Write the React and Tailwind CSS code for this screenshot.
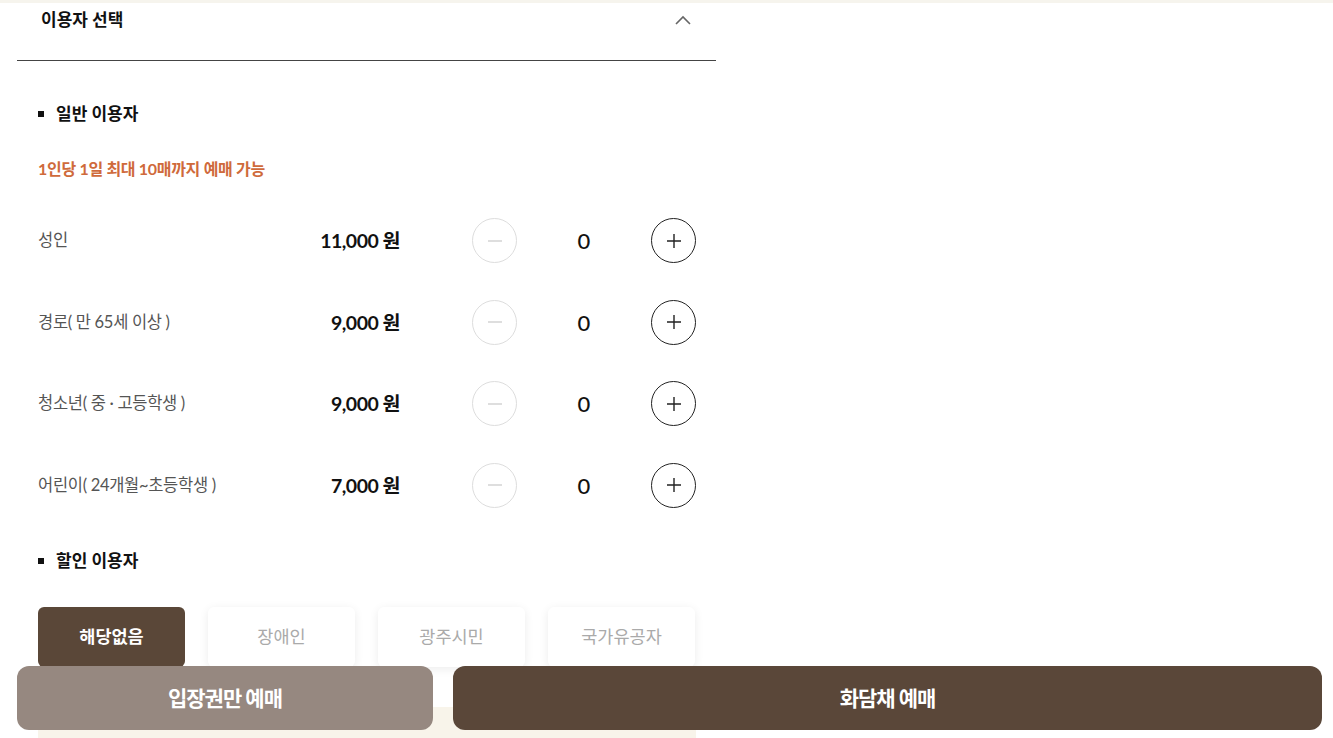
import React, { useState } from 'react';

const font = { fontFamily: "Lato, 'Noto Sans CJK KR', sans-serif" };

const rows = [
  { label: '성인', price: '11,000' },
  { label: '경로( 만 65세 이상 )', price: '9,000' },
  { label: '청소년( 중 · 고등학생 )', price: '9,000' },
  { label: '어린이( 24개월~초등학생 )', price: '7,000' },
];

const discounts = ['해당없음', '장애인', '광주시민', '국가유공자'];

function Counter({ label, price }) {
  const [count, setCount] = useState(0);
  return (
    <div className="flex h-[81.5px] items-center">
      <div className="flex w-[362px] items-center justify-between">
        <span className="text-[16.5px] tracking-[-0.3px] text-[#555]">{label}</span>
        <span className="text-[19.5px] font-bold tracking-[-0.5px] text-[#111]">{price} 원</span>
      </div>
      <button
        onClick={() => setCount(Math.max(0, count - 1))}
        className="ml-[72px] flex h-[45px] w-[45px] items-center justify-center rounded-full border border-[#ddd]"
      >
        <svg width="16" height="16" viewBox="0 0 16 16">
          <path d="M1 8h14" stroke="#ccc" strokeWidth="1.3" />
        </svg>
      </button>
      <span className="w-[134px] text-center text-[22px] font-medium text-[#111]">{count}</span>
      <button
        onClick={() => setCount(count + 1)}
        className="flex h-[45px] w-[45px] items-center justify-center rounded-full border border-[#222]"
      >
        <svg width="16" height="16" viewBox="0 0 16 16">
          <path d="M1 8h14M8 1v14" stroke="#222" strokeWidth="1.4" />
        </svg>
      </button>
    </div>
  );
}

export default function App() {
  const [selected, setSelected] = useState(0);

  return (
    <div className="min-h-screen bg-white" style={font}>
      <div className="h-[3px] bg-[#f6f4ed]" />
      <div className="w-[699px] ml-[17px]">
        {/* 헤더 */}
        <div className="flex h-[58px] items-start justify-between border-b border-[#444] pl-[24px] pr-[24px] pt-[5px]">
          <span className="text-[17px] font-bold leading-[24px] text-[#111]">이용자 선택</span>
          <svg width="18" height="24" viewBox="0 0 18 24">
            <path d="M2 16l7-7 7 7" fill="none" stroke="#666" strokeWidth="1.6" />
          </svg>
        </div>

        <div className="pl-[21px] pr-[20px]">
          <div className="mt-[41px] flex items-center gap-[12px]">
            <span className="h-[6px] w-[6px] bg-[#111]" />
            <span className="text-[17px] font-bold leading-[24px] text-[#111]">일반 이용자</span>
          </div>
          <p className="mt-[32px] text-[16px] font-bold leading-[22px] tracking-[-0.3px] text-[#cf6a3b]">
            1인당 1일 최대 10매까지 예매 가능
          </p>

          <div className="mt-[20px]">
            {rows.map((r) => (
              <Counter key={r.label} label={r.label} price={r.price} />
            ))}
          </div>

          <div className="mt-[23px] flex items-center gap-[12px]">
            <span className="h-[6px] w-[6px] bg-[#111]" />
            <span className="text-[17px] font-bold leading-[24px] text-[#111]">할인 이용자</span>
          </div>

          <div className="mt-[34px] flex gap-[23px]">
            {discounts.map((d, i) => (
              <button
                key={d}
                onClick={() => setSelected(i)}
                className={
                  i === selected
                    ? 'h-[60px] w-[147px] rounded-[6px] bg-[#5a4738] text-[17.5px] font-bold text-white'
                    : 'h-[60px] w-[147px] rounded-[6px] bg-white text-[17.5px] text-[#aaa] shadow-[0_2px_10px_rgba(0,0,0,0.08)]'
                }
              >
                {d}
              </button>
            ))}
          </div>

          <div className="mt-[40px] h-[120px] bg-[#f8f4ea]" />
        </div>
      </div>

      {/* 하단 예매 버튼 */}
      <div className="fixed bottom-[8px] left-[17px] right-[11px] flex gap-[20px]">
        <button className="h-[64px] w-[416px] rounded-[12px] bg-[#968880] text-[21px] font-bold tracking-[-1px] text-white">
          입장권만 예매
        </button>
        <button className="h-[64px] flex-1 rounded-[12px] bg-[#5a4739] text-[21px] font-bold tracking-[-1px] text-white">
          화담채 예매
        </button>
      </div>
    </div>
  );
}
